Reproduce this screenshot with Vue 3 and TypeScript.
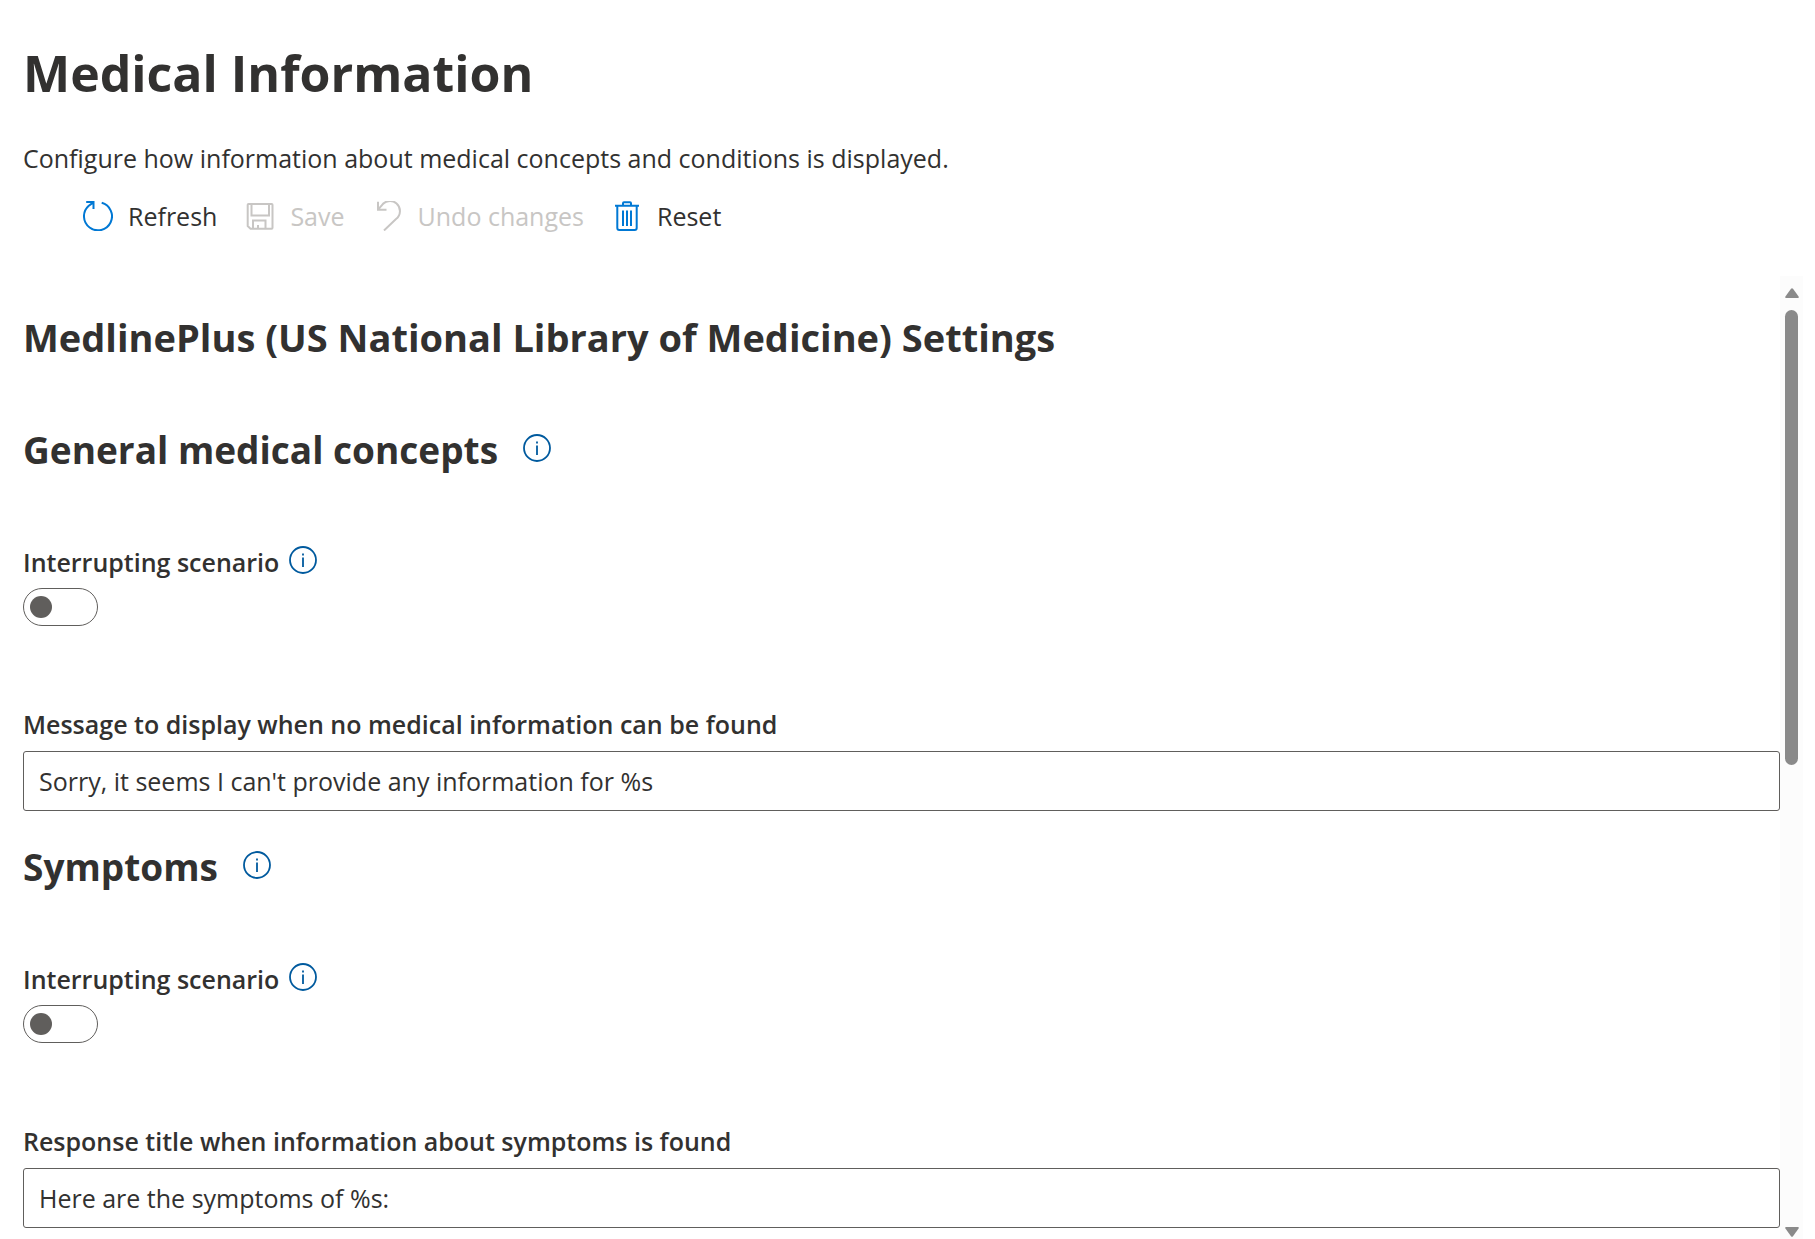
<script setup lang="ts">
import { ref } from 'vue'

interface Section {
  id: string
  title: string
  interrupting: boolean
  fieldLabel: string
  value: string
}

const sections = ref<Section[]>([
  {
    id: 'general',
    title: 'General medical concepts',
    interrupting: false,
    fieldLabel: 'Message to display when no medical information can be found',
    value: "Sorry, it seems I can't provide any information for %s",
  },
  {
    id: 'symptoms',
    title: 'Symptoms',
    interrupting: false,
    fieldLabel: 'Response title when information about symptoms is found',
    value: 'Here are the symptoms of %s:',
  },
])

// Share of the settings that is visible in the pane, in percent
const visibleShare = 50.3
</script>

<template>
  <main class="page">
    <header class="header">
      <h1>Medical Information</h1>
      <p class="intro">Configure how information about medical concepts and conditions is displayed.</p>
      <div class="toolbar" role="toolbar" aria-label="Settings actions">
        <button type="button" class="command">
          <svg class="icon" viewBox="0 0 30 30" aria-hidden="true">
            <path d="M18.7 1.8A14 14 0 1 1 5.5 5L10 1.6M3.2 1h7.3v7" />
          </svg>
          <span>Refresh</span>
        </button>
        <button type="button" class="command" disabled>
          <svg class="icon" viewBox="0 0 30 30" aria-hidden="true">
            <path d="M3.5 3h23.2q.8 0 .8.8v23q0 .9-.8.9H5.5L2.7 25V3.8q0-.8.8-.8zM6.5 3v11.5h17.5V3M8 27.5V19.5h12.5v8M13 27.5V24" />
          </svg>
          <span>Save</span>
        </button>
        <button type="button" class="command" disabled>
          <svg class="icon" viewBox="0 0 30 30" aria-hidden="true">
            <path d="M5 .8v7.9h8.500M5 8.700L8.300 5A10 10 0 1 1 23 18L11 29.500" />
          </svg>
          <span>Undo changes</span>
        </button>
        <button type="button" class="command">
          <svg class="icon" viewBox="0 0 30 30" aria-hidden="true">
            <path d="M3 4.8h24M5.3 4.8V27q0 2 2 2h15.400q2 0 2-2V4.800M11 4.500V2.200q0-1 1-1h6q1 0 1 1v2.300" />
            <path d="M11 9.500V25M15 9.500V25M19 9.500V25" />
          </svg>
          <span>Reset</span>
        </button>
      </div>
    </header>

    <div class="pane">
      <div class="content">
        <h2 class="source-title">MedlinePlus (US National Library of Medicine) Settings</h2>

        <section v-for="section in sections" :key="section.id" class="section">
          <div class="heading">
            <h2>{{ section.title }}</h2>
            <button type="button" class="info" :aria-label="`About ${section.title}`">
              <svg viewBox="0 0 28 28" aria-hidden="true">
                <circle cx="14" cy="14" r="13" />
                <path d="M14 11.500V21M14 7.500v2" />
              </svg>
            </button>
          </div>

          <div class="label-row">
            <label :for="`${section.id}-switch`">Interrupting scenario</label>
            <button type="button" class="info" aria-label="About interrupting scenario">
              <svg viewBox="0 0 28 28" aria-hidden="true">
                <circle cx="14" cy="14" r="13" />
                <path d="M14 11.500V21M14 7.500v2" />
              </svg>
            </button>
          </div>
          <input :id="`${section.id}-switch`" v-model="section.interrupting" class="switch" type="checkbox" role="switch" />

          <label class="field-label" :for="`${section.id}-text`">{{ section.fieldLabel }}</label>
          <input :id="`${section.id}-text`" v-model="section.value" class="text" type="text" />
        </section>
      </div>

      <div class="scrollbar" aria-hidden="true">
        <svg class="arrow" viewBox="0 0 14 10"><path d="M6 .8q1-1.200 2 0l5.600 7.700q.6 1.500-.6 1.500H1q-1.200 0-.6-1.500z" /></svg>
        <div class="track">
          <div class="thumb" :style="{ height: `${visibleShare}%` }"></div>
        </div>
        <svg class="arrow" viewBox="0 0 14 10"><path d="M6 9.200q1 1.200 2 0l5.600-7.700Q14.200 0 13 0H1Q-.2 0 .4 1.500z" /></svg>
      </div>
    </div>
  </main>
</template>

<style>
body {
  margin: 0;
  background: #fff;
}
</style>

<style scoped>
.page {
  display: flex;
  flex-direction: column;
  box-sizing: border-box;
  min-height: 100vh;
  padding-right: 12px;
  color: #323130;
  font-family: "Segoe UI", "Open Sans", "Noto Sans", sans-serif;
  font-size: 25px;
  line-height: 36px;
}

.header {
  padding: 41px 23px 42px;
}

h1,
h2,
p {
  margin: 0;
}

h1 {
  font-size: 50px;
  line-height: 64px;
  font-weight: 700;
}

h2 {
  font-size: 37px;
  line-height: 48px;
  font-weight: 700;
}

.source-title {
  font-size: 38px;
}

.intro {
  margin-top: 35px;
}

.toolbar {
  display: flex;
  gap: 28px;
  margin-top: 22px;
  padding-left: 60px;
}

button {
  padding: 0;
  border: 0;
  background: none;
  color: inherit;
  font: inherit;
  cursor: pointer;
}

.command {
  display: flex;
  align-items: center;
  gap: 15px;
}

.command:disabled {
  color: #c8c6c4;
  cursor: default;
}

.icon {
  width: 30px;
  height: 30px;
  fill: none;
  stroke: #0078d4;
  stroke-width: 2;
}

.command:disabled .icon {
  stroke: #c8c6c4;
}

.pane {
  display: flex;
  flex: 1;
}

.content {
  flex: 1;
  min-width: 0;
  padding: 37px 0 0 23px;
}

.section {
  display: flex;
  flex-direction: column;
  align-items: flex-start;
  padding-bottom: 32px;
}

.section:first-of-type {
  padding-top: 65px;
}

.section:last-of-type {
  padding-bottom: 0;
}

.heading,
.label-row {
  display: flex;
  align-items: center;
  gap: 25px;
}

.label-row {
  gap: 10px;
  margin-top: 70px;
}

label {
  font-weight: 600;
}

.info {
  height: 28px;
  margin-bottom: 4px;
}

.info svg {
  display: block;
  width: 28px;
  height: 28px;
  fill: none;
  stroke: #005a9e;
  stroke-width: 1.8;
}

.switch {
  display: flex;
  align-items: center;
  box-sizing: border-box;
  appearance: none;
  width: 75px;
  height: 38px;
  margin: 8px 0 0;
  padding: 0 6px;
  border: 1px solid #605e5c;
  border-radius: 19px;
  background: #fff;
}

.switch::before {
  content: "";
  width: 22px;
  height: 22px;
  border-radius: 50%;
  background: #605e5c;
}

.switch:checked {
  justify-content: flex-end;
}

.field-label {
  margin-top: 80px;
}

.text {
  box-sizing: border-box;
  width: 100%;
  height: 60px;
  margin: 9px 0 0;
  padding: 0 15px;
  border: 1px solid #605e5c;
  border-radius: 3px;
  background: #fff;
  color: inherit;
  font: inherit;
}

.scrollbar {
  display: flex;
  flex-direction: column;
  align-items: center;
  box-sizing: border-box;
  width: 23px;
  padding: 12px 0 2px;
  background: #fcfcfc;
}

.arrow {
  width: 14px;
  height: 10px;
  fill: #8a8a8a;
}

.track {
  flex: 1;
  width: 13px;
  margin: 12px 0;
}

.thumb {
  border-radius: 7px;
  background: #8a8a8a;
}
</style>
